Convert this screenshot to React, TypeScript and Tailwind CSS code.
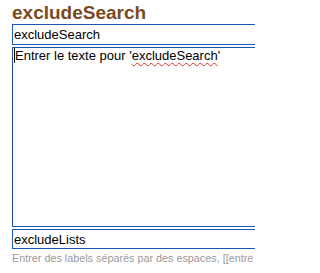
import React from 'react';

export default function App() {
  return (
    <div className="h-[273px] w-[255px] overflow-hidden bg-white pl-3 pt-[2px] font-['Liberation_Sans',Arial,sans-serif]">
      <div className="w-[300px]">
        <h1 className="text-[19px] font-bold leading-[22px] text-[#7b4a1e]">excludeSearch</h1>
        <input
          readOnly
          value="excludeSearch"
          className="block h-[21px] w-full border border-[#1a56b8] px-[1px] text-[13px] leading-[19px] text-black outline-none"
        />
        <div className="mt-[2px] h-[180px] w-full border border-[#1a56b8] px-[1px] text-[13px] leading-[15px] text-black">
          <span className="border-l border-black">Entrer le texte pour '</span>
          <span className="underline decoration-[#e0302a] decoration-wavy decoration-1 underline-offset-2">excludeSearch</span>
          <span>'</span>
        </div>
        <input
          readOnly
          value="excludeLists"
          className="mt-[2px] block h-[20px] w-full border border-[#1a56b8] px-[1px] text-[13px] leading-[18px] text-black outline-none"
        />
      </div>
      <p className="mt-[2px] whitespace-nowrap text-[10.8px] leading-[14px] text-[#9a9a9a]">
        Entrer des labels séparés par des espaces, [[entre
      </p>
    </div>
  );
}
